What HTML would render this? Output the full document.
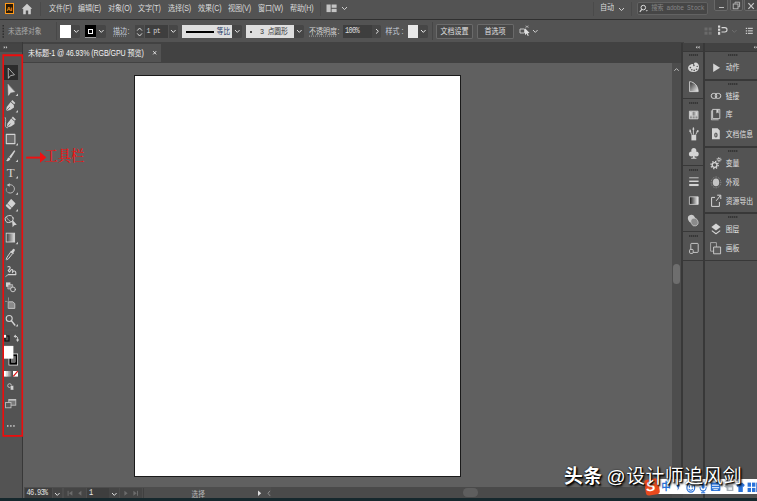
<!DOCTYPE html>
<html lang="zh-CN">
<head>
<meta charset="utf-8">
<title>Illustrator</title>
<style>
html,body{margin:0;padding:0;}
body{width:757px;height:501px;overflow:hidden;position:relative;background:#606060;font-family:"Liberation Sans","Noto Sans CJK SC",sans-serif;color:#d6d6d6;font-size:7px;}
.abs,.t,svg{position:absolute;}
.t{white-space:nowrap;line-height:10px;height:10px;}
#menubar{left:0;top:0;width:757px;height:19px;background:#535353;}
#sep1{left:0;top:19px;width:757px;height:1.4px;background:#303030;}
#ctrl{left:0;top:20px;width:757px;height:23px;background:#535353;}
#tabbar{left:0;top:42px;width:684px;height:20.5px;background:#424242;}
#tab{left:23.1px;top:44px;width:138.4px;height:18px;background:#535353;}
#tools{left:0;top:43.6px;width:21.6px;height:454.4px;background:#535353;}
#toolsep{left:21.6px;top:42.4px;width:1.5px;height:455.6px;background:#383838;}
#artboard{left:134px;top:75px;width:325px;height:400px;background:#fff;border:1px solid #1a1a1a;}
.m,.c,.pl,.btn,.sy{transform:scaleY(1.17);transform-origin:50% 50%;}
.m{top:3.8px;font-size:7.1px;color:#dadada;letter-spacing:-0.12px;}
.c{top:26.6px;font-size:7px;color:#cfcfcf;}
.dd{background:#464646;border-radius:0 1.5px 1.5px 0;}
.field{background:#3e3e3e;}
.btn{border:1px solid #6a6a6a;border-radius:1.5px;box-sizing:border-box;text-align:center;color:#e0e0e0;font-size:7px;line-height:11px;height:13px;top:24.5px;background:#484848;}
.pg{background:#535353;}
.pg2{background:#515151;}
.grip{position:absolute;width:9.4px;height:1.8px;background:repeating-linear-gradient(90deg,#363636 0 1.4px,#464646 1.4px 2px);}
.pl{margin-top:0.5px;font-size:6.8px;color:#e0e0e0;left:725.8px;}
.wm{font-size:18.8px;line-height:26px;height:26px;color:#fff;text-shadow:1px 1px 1px #000,0 0 1.5px #000,1.5px 1.5px 2px rgba(0,0,0,.8);letter-spacing:0px;}
</style>
</head>
<body>
<!-- MENU BAR -->
<div class="abs" id="menubar"></div>
<div class="abs" id="sep1"></div>
<div class="abs" style="left:5px;top:3.3px;width:9px;height:10.3px;box-sizing:border-box;border:1px solid #ff9a1a;background:#2c1a05;"></div>
<div class="t" style="left:6.4px;top:3.6px;font-size:6px;font-weight:bold;color:#ff9a1a;letter-spacing:-0.3px;">Ai</div>
<svg style="left:21px;top:3px" width="12" height="12" viewBox="0 0 12 12"><path d="M6 0.8 L11.2 5.8 L9.8 5.8 L9.8 11.2 L7.2 11.2 L7.2 7.6 L4.8 7.6 L4.8 11.2 L2.2 11.2 L2.2 5.8 L0.8 5.8 Z" fill="#cdcdcd"/></svg>
<div class="abs" style="left:40px;top:2px;width:1px;height:14px;background:#4a4a4a;"></div>
<div class="t m" style="left:49px;">文件(F)</div>
<div class="t m" style="left:78px;">编辑(E)</div>
<div class="t m" style="left:108px;">对象(O)</div>
<div class="t m" style="left:138px;">文字(T)</div>
<div class="t m" style="left:168px;">选择(S)</div>
<div class="t m" style="left:198px;">效果(C)</div>
<div class="t m" style="left:228px;">视图(V)</div>
<div class="t m" style="left:258px;">窗口(W)</div>
<div class="t m" style="left:290px;">帮助(H)</div>
<div class="abs" style="left:320px;top:2px;width:1px;height:14px;background:#4a4a4a;"></div>
<svg style="left:326px;top:4px" width="12" height="9" viewBox="0 0 12 9"><rect x="0.5" y="0.5" width="4.2" height="7.6" fill="#c4c4c4"/><rect x="5.6" y="0.5" width="5" height="3.3" fill="#c4c4c4"/><rect x="5.6" y="4.8" width="5" height="3.3" fill="#c4c4c4"/></svg>
<svg style="left:341px;top:6px" width="7" height="5" viewBox="0 0 7 5"><path d="M1 1 L3.5 3.6 L6 1" fill="none" stroke="#d0d0d0" stroke-width="1"/></svg>
<!-- menu right -->
<div class="abs" style="left:593px;top:2px;width:1px;height:14px;background:#4a4a4a;"></div>
<div class="t m" style="left:600px;top:3px;">自动</div>
<svg style="left:618px;top:7px" width="7" height="5" viewBox="0 0 7 5"><path d="M1 1 L3.5 3.6 L6 1" fill="none" stroke="#d0d0d0" stroke-width="1"/></svg>
<div class="abs" style="left:631px;top:2px;width:1px;height:14px;background:#4a4a4a;"></div>
<div class="abs" style="left:637px;top:2px;width:71px;height:12.5px;box-sizing:border-box;border:1px solid #626262;border-radius:2px;background:#464646;"></div>
<svg style="left:639px;top:4px" width="10" height="9" viewBox="0 0 10 9"><circle cx="4.3" cy="3.6" r="2.3" fill="none" stroke="#dcdcdc" stroke-width="1"/><path d="M2.8 5.4 L0.8 7.8" stroke="#dcdcdc" stroke-width="1.1"/><path d="M6.6 6.2 L9 6.2 L7.8 7.6 Z" fill="#dcdcdc"/></svg>
<div class="t sy" style="left:651.2px;top:4px;font-size:6.3px;color:#858585;font-family:'Liberation Mono','Noto Sans CJK SC',monospace;letter-spacing:-0.35px;">搜索 adobe Stock</div>
<div class="abs" style="left:714px;top:-1px;width:14px;height:12px;box-sizing:border-box;border:1px solid #686868;border-radius:0 0 2px 2px;background:#4a4a4a;"></div>
<div class="abs" style="left:729.5px;top:-1px;width:13px;height:12px;box-sizing:border-box;border:1px solid #686868;border-radius:0 0 2px 2px;background:#4a4a4a;"></div>
<div class="abs" style="left:744px;top:-1px;width:14px;height:12px;box-sizing:border-box;border:1px solid #686868;border-radius:0 0 2px 2px;background:#4a4a4a;"></div>
<div class="abs" style="left:718.5px;top:6.5px;width:5.6px;height:1.5px;background:#bcbcbc;"></div>
<svg style="left:732px;top:1px" width="9" height="9" viewBox="0 0 9 9"><path d="M3 2.6 V1.2 H7.6 V5.8 H6.2" fill="none" stroke="#bcbcbc" stroke-width="0.9"/><rect x="1.2" y="3" width="4.8" height="4.8" fill="none" stroke="#bcbcbc" stroke-width="0.9"/></svg>
<svg style="left:747px;top:1.5px" width="8" height="8" viewBox="0 0 8 8"><path d="M1.4 1.2 L6.8 6.8 M6.8 1.2 L1.4 6.8" stroke="#c8c8c8" stroke-width="1.2"/></svg>
<!-- CONTROL BAR -->
<div class="abs" id="ctrl"></div>
<svg style="left:1.5px;top:24px" width="3" height="15" viewBox="0 0 3 15"><g fill="#2e2e2e"><rect x="0.5" y="1" width="1.5" height="1.5"/><rect x="0.5" y="3.8" width="1.5" height="1.5"/><rect x="0.5" y="6.6" width="1.5" height="1.5"/><rect x="0.5" y="9.4" width="1.5" height="1.5"/><rect x="0.5" y="12.2" width="1.5" height="1.5"/></g></svg>
<div class="t c" style="left:8px;color:#a9a9a9;font-size:6.7px;">未选择对象</div>
<div class="abs" style="left:56px;top:22px;width:1px;height:18px;background:#484848;"></div>
<div class="abs" style="left:60px;top:25px;width:11.3px;height:12.6px;background:#ffffff;"></div>
<div class="abs dd" style="left:71.3px;top:25px;width:9px;height:12.6px;"></div>
<svg style="left:72.8px;top:29px" width="7" height="5" viewBox="0 0 7 5"><path d="M1 1 L3.3 3.4 L5.6 1" fill="none" stroke="#e0e0e0" stroke-width="1"/></svg>
<div class="abs" style="left:85.2px;top:25px;width:10.6px;height:12.6px;background:#000;box-sizing:border-box;border-bottom:1px solid #999;"></div>
<div class="abs" style="left:88.3px;top:28.6px;width:4.6px;height:5px;box-sizing:border-box;border:1.2px solid #fff;background:#000;"></div>
<div class="abs dd" style="left:96px;top:25px;width:9.5px;height:12.6px;"></div>
<svg style="left:97.8px;top:29px" width="7" height="5" viewBox="0 0 7 5"><path d="M1 1 L3.3 3.4 L5.6 1" fill="none" stroke="#e0e0e0" stroke-width="1"/></svg>
<div class="t c" style="left:113px;color:#c8d0dc;text-decoration:underline dotted rgba(170,180,195,.6);text-underline-offset:1.2px;text-decoration-thickness:0.8px;">描边</div>
<div class="t c" style="left:127.5px;">:</div>
<div class="abs" style="left:135.3px;top:24.8px;width:8.7px;height:12.8px;background:#464646;"></div>
<svg style="left:136px;top:25.5px" width="8" height="12" viewBox="0 0 8 12"><path d="M1.2 4.6 L3.6 2 L6 4.6 M1.2 7.4 L3.6 10 L6 7.4" fill="none" stroke="#d8d8d8" stroke-width="1"/></svg>
<div class="abs field" style="left:144.6px;top:24.8px;width:23.8px;height:12.8px;"></div>
<div class="t c" style="left:146.4px;top:26.8px;font-family:'Liberation Mono',monospace;font-size:6.6px;letter-spacing:-0.5px;color:#dcdcdc;">1 pt</div>
<div class="abs dd" style="left:168.6px;top:24.8px;width:9.6px;height:12.8px;"></div>
<svg style="left:170px;top:29px" width="7" height="5" viewBox="0 0 7 5"><path d="M1 1 L3.3 3.4 L5.6 1" fill="none" stroke="#e0e0e0" stroke-width="1"/></svg>
<div class="abs" style="left:182.2px;top:24.8px;width:49.6px;height:12.8px;background:#dedede;"></div>
<div class="abs" style="left:185.6px;top:31px;width:28.4px;height:2px;background:#000;"></div>
<div class="t sy" style="left:216.8px;top:27px;font-size:6.6px;color:#1f3a66;">等比</div>
<div class="abs dd" style="left:232.3px;top:24.8px;width:9.8px;height:12.8px;"></div>
<svg style="left:234px;top:29px" width="7" height="5" viewBox="0 0 7 5"><path d="M1 1 L3.3 3.4 L5.6 1" fill="none" stroke="#e0e0e0" stroke-width="1"/></svg>
<div class="abs" style="left:246px;top:24.8px;width:47.6px;height:12.8px;background:#dedede;"></div>
<div class="abs" style="left:250.4px;top:30.6px;width:2px;height:2px;border-radius:1px;background:#111;"></div>
<div class="t sy" style="left:260px;top:26.8px;font-size:6.8px;color:#333;font-family:'Liberation Mono','Noto Sans CJK SC',monospace;letter-spacing:-0.2px;">3 点圆形</div>
<div class="abs dd" style="left:294.2px;top:24.8px;width:9.8px;height:12.8px;"></div>
<svg style="left:296px;top:29px" width="7" height="5" viewBox="0 0 7 5"><path d="M1 1 L3.3 3.4 L5.6 1" fill="none" stroke="#e0e0e0" stroke-width="1"/></svg>
<div class="t c" style="left:309px;color:#d4d4d4;text-decoration:underline dotted rgba(190,190,190,.6);text-underline-offset:1.2px;text-decoration-thickness:0.8px;">不透明度</div>
<div class="t c" style="left:337.5px;">:</div>
<div class="abs field" style="left:343.4px;top:24.8px;width:28.4px;height:12.8px;"></div>
<div class="t c" style="left:345px;top:26.2px;font-family:'Liberation Mono',monospace;font-size:7px;letter-spacing:-0.7px;color:#dcdcdc;">100%</div>
<div class="abs dd" style="left:372.2px;top:24.8px;width:9.2px;height:12.8px;"></div>
<svg style="left:374.5px;top:28px" width="5" height="7" viewBox="0 0 5 7"><path d="M1 1 L3.4 3.3 L1 5.6" fill="none" stroke="#e0e0e0" stroke-width="1"/></svg>
<div class="t c" style="left:385.5px;color:#c8d0dc;">样式 :</div>
<div class="abs" style="left:407.6px;top:25px;width:10.2px;height:13px;background:#e8e8e8;"></div>
<div class="abs dd" style="left:418px;top:25px;width:10.3px;height:13px;"></div>
<svg style="left:420px;top:29px" width="7" height="5" viewBox="0 0 7 5"><path d="M1 1 L3.3 3.4 L5.6 1" fill="none" stroke="#e8e8e8" stroke-width="1"/></svg>
<div class="abs" style="left:432px;top:22px;width:1px;height:18px;background:#464646;"></div>
<div class="abs btn" style="left:435.8px;width:37.6px;">文档设置</div>
<div class="abs btn" style="left:476.6px;width:37px;">首选项</div>
<svg style="left:519px;top:25px" width="12" height="12" viewBox="0 0 12 12"><path d="M1 4 H5.5 V8 H1 Z" fill="none" stroke="#d0d0d0" stroke-width="0.9"/><path d="M6 3.2 L6 10.2 L7.6 8.6 L8.8 11 L9.8 10.5 L8.6 8.2 L10.6 8 Z" fill="#e0e0e0"/><path d="M6.5 0.8 L9.5 2.5 M9.5 0.8 L6.5 2.5" stroke="#c0c0c0" stroke-width="0.7"/></svg>
<svg style="left:531.5px;top:29px" width="7" height="5" viewBox="0 0 7 5"><path d="M1 1 L3.3 3.4 L5.6 1" fill="none" stroke="#d0d0d0" stroke-width="1"/></svg>
<!-- control right icons -->
<svg style="left:704px;top:26.6px" width="9" height="9" viewBox="0 0 9 9"><g fill="#6a6a6a"><rect x="0.5" y="0.5" width="3" height="3"/><rect x="4.7" y="0.5" width="3" height="3"/><rect x="0.5" y="4.7" width="3" height="3"/><rect x="4.7" y="4.7" width="3" height="3"/></g></svg>
<svg style="left:717px;top:25px" width="12" height="11" viewBox="0 0 12 11"><g fill="#d8d8d8"><rect x="1" y="0.5" width="2.2" height="2.2"/><rect x="1" y="3.6" width="2.2" height="2.2"/><rect x="1" y="6.8" width="2.2" height="3"/></g><path d="M4.5 2.6 H7.8 A2 2 0 0 1 7.8 7 H4.5" fill="none" stroke="#d8d8d8" stroke-width="1.1"/></svg>
<svg style="left:730.5px;top:29px" width="7" height="5" viewBox="0 0 7 5"><path d="M1 1 L3.3 3.4 L5.6 1" fill="none" stroke="#6e6e6e" stroke-width="1"/></svg>
<svg style="left:745px;top:27px" width="9" height="8" viewBox="0 0 9 8"><g fill="#d0d0d0"><rect x="0.8" y="0.8" width="1.2" height="1.2"/><rect x="0.8" y="3.3" width="1.2" height="1.2"/><rect x="0.8" y="5.8" width="1.2" height="1.2"/><rect x="2.8" y="0.8" width="5" height="1.1"/><rect x="2.8" y="3.3" width="5" height="1.1"/><rect x="2.8" y="5.8" width="5" height="1.1"/></g></svg>
<!-- TAB BAR / CANVAS -->
<div class="abs" id="tabbar"></div>
<div class="abs" id="tab"></div>
<div class="t sy" style="left:28px;top:48.5px;font-size:7.1px;color:#f2f2f2;letter-spacing:-0.1px;">未标题-1 @ 46.93% (RGB/GPU 预览)</div>
<svg style="left:152.4px;top:50.4px" width="6" height="6" viewBox="0 0 6 6"><path d="M1.2 1.2 L4.2 4.4 M4.2 1.2 L1.2 4.4" stroke="#e0e0e0" stroke-width="1"/></svg>
<div class="abs" id="artboard"></div>
<!-- vertical scrollbar -->
<div class="abs" style="left:672px;top:62.5px;width:9.2px;height:425px;background:#4d4d4d;"></div>
<svg style="left:673.4px;top:66.6px" width="7" height="5" viewBox="0 0 7 5"><path d="M1.3 3.8 L3.5 1.6 L5.7 3.8" fill="none" stroke="#c8c8c8" stroke-width="0.9"/></svg>
<div class="abs" style="left:672.8px;top:264px;width:7.6px;height:20px;border-radius:3.8px;background:#6e6e6e;"></div>
<!-- TOOLBAR -->
<div class="abs" id="tools"></div>
<div class="abs" style="left:0;top:43.6px;width:21.6px;height:8px;background:#444444;"></div>
<div class="abs" id="toolsep"></div>
<svg style="left:2.6px;top:45px" width="6" height="5" viewBox="0 0 6 5"><path d="M0.8 0.9 L2.2 2.3 L0.8 3.7 Z M2.9 0.9 L4.3 2.3 L2.9 3.7 Z" fill="#d0d0d0"/></svg>
<div class="abs" style="left:4px;top:65px;width:14px;height:15px;background:#2c2c2c;"></div>
<svg id="toolicons" style="left:0;top:60px" width="23" height="380" viewBox="0 60 23 380">
<g fill="none" stroke="#d2d2d2" stroke-width="1" stroke-linejoin="round" stroke-linecap="round">
<!-- selection -->
<path d="M8.2 68.4 L8.4 78.4 L10.4 75.7 L14.1 74.9 Z" stroke-width="0.8" stroke="#c8c8c8"/>
<!-- direct selection -->
<path d="M8 84.6 L8.4 95.4 L10.7 92.4 L14.5 91.8 Z" fill="#d2d2d2" stroke-width="0.5"/>
<!-- pen -->
<path d="M12.3 100.1 L15.3 103 L14.2 104.3 L11.1 101.4 Z" fill="#d2d2d2" stroke="none"/>
<path d="M10.6 101.9 L13.8 104.9 L14 107.4 L10.4 110.1 L6 111 L6.7 107 Z" fill="#d2d2d2" stroke="none"/>
<path d="M6.2 110.8 L9.6 107.4" stroke="#535353" stroke-width="0.7"/>
<!-- curvature -->
<path d="M12.9 116.6 L15.9 119.5 L14.8 120.8 L11.7 117.9 Z" fill="#d2d2d2" stroke="none"/>
<path d="M11.2 118.4 L14.4 121.4 L14.6 123.9 L11 126.6 L6.8 127.6 L7.4 123.5 Z" fill="#d2d2d2" stroke="none"/>
<path d="M7 127.3 L10.2 123.9" stroke="#535353" stroke-width="0.7"/>
<path d="M5.3 117.6 C6.4 120 5 123.6 5.4 126 C5.6 127.2 6.4 127.8 7.4 127.8" stroke-width="0.8" stroke="#c4c4c4"/>
<!-- rectangle -->
<rect x="6.3" y="134.4" width="8.6" height="9.2" fill="#6a6a6a" stroke-width="1.1"/>
<!-- brush -->
<path d="M14.3 150.2 L15.3 150.9 L10.9 158.2 L9 156.9 Z" fill="#d2d2d2" stroke="none"/>
<path d="M8.5 157.4 L10.5 158.8 C10 161 7.6 161.4 6 161 C7.4 160 7.2 158.4 8.5 157.4 Z" fill="#d2d2d2" stroke="none"/>
<!-- rotate -->
<path d="M9 184.8 C12.6 184 15.2 187 14.2 190.2 C13.5 192.4 11 193.8 8.6 192.8" stroke-width="0.9" stroke="#c4c4c4"/>
<path d="M6.6 185 L9.8 183.2 L9.6 186.8 Z" fill="#c8c8c8" stroke="none"/>
<path d="M7.4 192.2 C6.2 191.2 6 189.6 6.6 188.2" stroke-dasharray="1 1" stroke-width="0.8" stroke="#aaa"/>
<!-- eraser -->
<path d="M10.6 199.4 Q11.2 198.8 11.8 199.4 L15.2 202.9 Q15.7 203.5 15.2 204.1 L10.5 209.2 Q9.9 209.8 9.3 209.2 L6.1 206.2 Q5.5 205.6 6.1 205 Z" fill="#d2d2d2" stroke="none"/>
<path d="M7.4 203.8 L11.6 207.8" stroke="#535353" stroke-width="0.7"/>
<!-- shape builder -->
<ellipse cx="9.2" cy="219" rx="4" ry="3.4" transform="rotate(-15 9.2 219)" stroke-width="0.9"/>
<path d="M6.4 217.2 C8 220 10 221.6 12 222" stroke-width="0.7"/>
<path d="M12 219.6 L12.6 227.2 L14.2 225.2 L16.8 224.8 Z" fill="#d2d2d2" stroke="none"/>
<!-- eyedropper -->
<path d="M12.6 249.4 C13.6 248 15.6 249.6 14.6 250.9 L13.4 252.6 L13.9 253.2 L13.2 253.9 L10.4 251.4 L11 250.7 L11.6 251.1 Z" fill="#d2d2d2" stroke="none"/>
<path d="M11 252.2 L12.6 253.6 L8.4 258.8 L6.6 259.8 L6.2 259.4 L7 257.4 Z" stroke-width="1" fill="#5a5a5a"/>
<!-- symbol sprayer -->
<path d="M8 266.8 C9.6 266 10.8 267.2 9.8 268.6 L8.2 270.6 L9.6 272 L10.8 270.2 C11.6 269 13 269.6 12.8 270.8 L12.4 272.6 C13.4 270.4 15.8 270.6 15.8 272.8 L15.8 274.6 L8.4 274.6" stroke-width="1.15"/>
<path d="M8.4 274.4 L5.8 276.4" stroke-width="0.9"/>
<!-- live paint / blend -->
<rect x="6" y="282.4" width="4.4" height="4.4" fill="#d2d2d2" stroke="none"/>
<rect x="8.2" y="284.6" width="4.4" height="4.4" fill="#8a8a8a" stroke="#d2d2d2" stroke-width="0.6"/>
<circle cx="13" cy="289.4" r="2.4" fill="#535353" stroke-width="0.9"/>
<!-- artboard -->
<path d="M8.6 301.8 L12.8 301.8 L14.8 303.6 L14.8 308.4 L8.6 308.4 Z" fill="#8a8a8a" stroke-width="0.8"/>
<path d="M5.4 301.4 H7.2 M8.5 297.8 V300.4" stroke-width="0.6" stroke="#bbb"/>
<!-- zoom -->
<circle cx="9.2" cy="318.5" r="3" stroke-width="1.1"/>
<path d="M11.5 320.9 L14.8 325" stroke-width="1.5"/>
</g>
<!-- text tool -->
<text x="10.8" y="176.8" font-family="Liberation Serif, serif" font-size="13" fill="#d2d2d2" text-anchor="middle">T</text>
<!-- gradient -->
<defs><linearGradient id="gtool" x1="0" x2="1" y1="0" y2="0"><stop offset="0" stop-color="#3a3a3a"/><stop offset="1" stop-color="#e0e0e0"/></linearGradient>
<linearGradient id="gcm" x1="0" x2="1" y1="0" y2="0"><stop offset="0.3" stop-color="#ffffff"/><stop offset="1" stop-color="#6a6a6a"/></linearGradient></defs>
<rect x="6.2" y="233.2" width="8.4" height="8.8" fill="url(#gtool)" stroke="#d2d2d2" stroke-width="0.9"/>
<!-- sub-tool triangles -->
<g fill="#c8c8c8">
<path d="M18 93.5 V96.0 H15.6 Z"/><path d="M18 110.1 V112.6 H15.6 Z"/><path d="M18 143.1 V145.6 H15.6 Z"/><path d="M18 159.5 V162.0 H15.6 Z"/><path d="M18 175.9 V178.4 H15.6 Z"/><path d="M18 192.3 V194.8 H15.6 Z"/><path d="M18 208.9 V211.4 H15.6 Z"/><path d="M18 241.7 V244.2 H15.6 Z"/><path d="M18 324.1 V326.6 H15.6 Z"/>
</g>
<!-- separator -->
<rect x="4" y="329.6" width="14" height="0.8" fill="#5a5a5a"/>
<!-- default fill/stroke -->
<rect x="5" y="336" width="4" height="5" fill="#535353" stroke="#111" stroke-width="1.2"/>
<rect x="3.6" y="334.4" width="2.8" height="3.6" fill="#fff" stroke="#111" stroke-width="0.5"/>
<!-- swap -->
<path d="M14.6 336.2 C16.8 335.6 18 337.4 17.6 340" fill="none" stroke="#d2d2d2" stroke-width="1"/>
<path d="M13.6 336.4 L15.8 334.4 L15.8 338 Z M16 339.6 L19.2 339.6 L17.6 342 Z" fill="#d2d2d2"/>
<!-- stroke -->
<rect x="8.6" y="353.6" width="9.4" height="11.8" fill="#fff"/>
<rect x="9.3" y="354.3" width="8" height="10.4" fill="#000"/>
<rect x="11.3" y="356.6" width="4" height="5.8" fill="#6e6e6e" stroke="#bbb" stroke-width="0.4"/>
<!-- fill -->
<rect x="3.4" y="346" width="9.8" height="12.6" fill="#fff" stroke="#ddd" stroke-width="0.3"/>
<!-- color modes -->
<rect x="3.4" y="371" width="8.2" height="5.6" fill="url(#gcm)"/>
<rect x="5.9" y="371" width="0.5" height="5.6" fill="#bdbdbd"/><rect x="8.7" y="371" width="0.5" height="5.6" fill="#999"/>
<rect x="13" y="371" width="5" height="5.6" fill="#fff"/>
<path d="M13.2 376.4 L17.8 371.2" stroke="#e01010" stroke-width="1.2"/>
<!-- draw mode -->
<circle cx="9.6" cy="385.6" r="1.9" fill="none" stroke="#c8c8c8" stroke-width="0.9"/>
<rect x="10.4" y="385.6" width="3.2" height="4.4" fill="#d2d2d2" stroke="#535353" stroke-width="0.4"/>
<!-- screen mode -->
<rect x="8.8" y="399.4" width="7" height="5.8" fill="#777" stroke="#c8c8c8" stroke-width="0.8"/>
<rect x="8.8" y="399.4" width="7" height="1.2" fill="#c8c8c8"/>
<rect x="5.6" y="402.4" width="5.4" height="5.4" fill="#5a5a5a" stroke="#c8c8c8" stroke-width="0.8"/>
<!-- dots -->
<g fill="#cfcfcf"><rect x="7" y="425.2" width="1.5" height="1.5"/><rect x="10.1" y="425.2" width="1.5" height="1.5"/><rect x="13.2" y="425.2" width="1.5" height="1.5"/></g>
</svg>
<!-- RED ANNOTATION -->
<svg style="left:0;top:50px" width="26" height="390" viewBox="0 50 26 390"><path d="M2.4 54.2 H23.1 V436.7 H2.4 Z M4 56.3 V435.1 H21.5 V56.3 Z" fill="#ee0c0c" fill-rule="evenodd"/></svg>
<svg style="left:24px;top:150px" width="24" height="15" viewBox="0 0 24 15"><path d="M2.1 7.6 H17" stroke="#f01010" stroke-width="1.9"/><path d="M16 1.9 L22.3 7.4 L16 12.8 Z" fill="#f01010"/></svg>
<div class="t" style="left:44.6px;top:149.4px;font-size:13.2px;line-height:16px;height:16px;color:#f01212;font-weight:500;transform:scaleY(1.1);font-family:'Liberation Serif','Noto Serif CJK SC',serif;">工具栏</div>
<!-- RIGHT DOCK -->
<div class="abs" style="left:681px;top:43px;width:76px;height:455px;background:#383838;"></div>
<div class="abs" style="left:682.8px;top:43px;width:20.6px;height:8px;background:#424242;"></div>
<div class="abs" style="left:704.6px;top:43px;width:52.4px;height:8px;background:#424242;"></div>
<svg style="left:695px;top:44.5px" width="6" height="5" viewBox="0 0 6 5"><path d="M2.3 0.8 L0.8 2.3 L2.3 3.8 Z M4.5 0.8 L3 2.3 L4.5 3.8 Z" fill="#d0d0d0"/></svg>
<svg style="left:752.5px;top:44.5px" width="6" height="5" viewBox="0 0 6 5"><path d="M2.3 0.8 L0.8 2.3 L2.3 3.8 Z M4.5 0.8 L3 2.3 L4.5 3.8 Z" fill="#d0d0d0"/></svg>
<!-- icon column groups -->
<div class="abs pg" style="left:683px;top:51.5px;width:20.4px;height:46px;"></div>
<div class="abs pg" style="left:683px;top:99px;width:20.4px;height:65.6px;"></div>
<div class="abs pg" style="left:683px;top:166px;width:20.4px;height:64.6px;"></div>
<div class="abs pg" style="left:683px;top:232px;width:20.4px;height:27.6px;"></div>
<div class="abs pg2" style="left:683px;top:261px;width:20.4px;height:237px;"></div>
<!-- label column groups -->
<div class="abs pg" style="left:704.6px;top:51.5px;width:52.4px;height:27.5px;"></div>
<div class="abs pg" style="left:704.6px;top:80.5px;width:52.4px;height:65.6px;"></div>
<div class="abs pg" style="left:704.6px;top:147.5px;width:52.4px;height:64.6px;"></div>
<div class="abs pg" style="left:704.6px;top:213.5px;width:52.4px;height:46px;"></div>
<div class="abs pg2" style="left:704.6px;top:261px;width:52.4px;height:237px;"></div>
<!-- grippers -->
<div class="grip" style="left:689px;top:54.4px;"></div>
<div class="grip" style="left:689px;top:102px;"></div>
<div class="grip" style="left:689px;top:169px;"></div>
<div class="grip" style="left:689px;top:235px;"></div>
<div class="grip" style="left:728.4px;top:54.4px;"></div>
<div class="grip" style="left:728.4px;top:83.4px;"></div>
<div class="grip" style="left:728.4px;top:150.4px;"></div>
<div class="grip" style="left:728.4px;top:216.4px;"></div>
<!-- panel labels -->
<div class="t pl" style="top:62.8px;">动作</div>
<div class="t pl" style="top:91.3px;">链接</div>
<div class="t pl" style="top:109.6px;">库</div>
<div class="t pl" style="top:129px;">文档信息</div>
<div class="t pl" style="top:158px;">变量</div>
<div class="t pl" style="top:177.3px;">外观</div>
<div class="t pl" style="top:196.3px;">资源导出</div>
<div class="t pl" style="top:224.3px;">图层</div>
<div class="t pl" style="top:243.3px;">画板</div>
<!-- panel icons -->
<svg id="dockicons" style="left:683px;top:50px" width="74" height="212" viewBox="683 50 74 212">
<defs>
<linearGradient id="gcg" x1="0" x2="1" y1="0" y2="1"><stop offset="0" stop-color="#2a2a2a"/><stop offset="1" stop-color="#f0f0f0"/></linearGradient>
<linearGradient id="ggr" x1="0" x2="1" y1="0" y2="0"><stop offset="0" stop-color="#111"/><stop offset="1" stop-color="#f4f4f4"/></linearGradient>
</defs>
<g fill="none" stroke="#d4d4d4" stroke-width="1" stroke-linejoin="round">
<!-- color palette -->
<path d="M693.2 64 C690.4 64 688.1 65.8 688.1 68.2 C688.1 70.6 690.4 72 693.4 72 C696.8 72 699 70 699 67 C699 64.4 697.4 62.6 695.4 62.6 C694 62.6 693.6 63.8 694.4 64.8 C695.2 65.8 694.4 66.6 693.2 66 Z" fill="#d6d6d6" stroke="none"/>
<g fill="#535353" stroke="none"><circle cx="690.4" cy="67.6" r="0.8"/><circle cx="691.8" cy="69.8" r="0.8"/><circle cx="694.2" cy="70.4" r="0.8"/><circle cx="696.5" cy="69.2" r="0.8"/><circle cx="697.2" cy="66.4" r="0.7"/></g>
<!-- color guide -->
<path d="M689.6 81.6 C694.6 82 698 86 698.2 91.6 L689.6 91.6 Z" fill="url(#gcg)" stroke-width="0.9"/>
<!-- swatches -->
<rect x="689.4" y="111.2" width="8.6" height="7.6" fill="#8a8a8a" stroke-width="0.9"/>
<path d="M689.4 116 H698 M692.3 111.2 V118.8 M695.1 111.2 V118.8" stroke-width="0.7"/>
<rect x="689.9" y="111.7" width="2" height="4" fill="#d4d4d4" stroke="none"/><rect x="695.5" y="111.7" width="2" height="4" fill="#d4d4d4" stroke="none"/>
<!-- brushes -->
<path d="M691.4 134.8 H696.2 V140.4 H691.4 Z" fill="#d4d4d4" stroke="none"/>
<path d="M693.4 128 V134.6 M691.6 134.6 L690.2 131 M695.8 134.6 L697.4 131.2" stroke-width="0.9"/>
<path d="M692.8 129.6 L693.4 127.4 L694 129.6 Z M689.6 131.6 L690 129.6 L691 131.4 Z M696.8 131.6 L698 130 L698.2 132 Z" fill="#d4d4d4" stroke-width="0.6"/>
<!-- symbols club -->
<g fill="#d4d4d4" stroke="none"><circle cx="693.8" cy="150.4" r="2.5"/><circle cx="691.4" cy="154" r="2.5"/><circle cx="696.2" cy="154" r="2.5"/><path d="M693.2 153 H694.4 L694.8 157.8 H696.4 V158.8 H691.2 V157.8 H692.8 Z"/></g>
<!-- stroke -->
<path d="M689.2 177.8 H698.6" stroke-width="0.9"/><path d="M689.2 181.3 H698.6" stroke-width="1.5"/><path d="M689.2 185 H698.6" stroke-width="2.1"/>
<!-- gradient -->
<rect x="689.4" y="196.8" width="8.8" height="7.6" fill="url(#ggr)" stroke-width="0.8"/>
<!-- transparency -->
<ellipse cx="691.6" cy="218.8" rx="3.6" ry="4" fill="#cacaca" stroke="none" transform="rotate(-20 691.6 218.8)"/>
<ellipse cx="694.4" cy="222" rx="3.5" ry="4" fill="#8a8a8a" stroke="#c8c8c8" stroke-width="0.7" transform="rotate(-20 694.6 221.8)"/>
<!-- asset/artboard small -->
<rect x="690.8" y="243.4" width="7.4" height="9" rx="0.8" stroke-width="0.9"/>
<rect x="689.6" y="249.4" width="3.6" height="4" rx="1" fill="#535353" stroke-width="0.9"/>
<!-- play -->
<path d="M713.2 63.6 L720 67.8 L713.2 72 Z" fill="#d4d4d4" stroke="none"/>
<!-- links -->
<rect x="711.2" y="93.4" width="5.6" height="5" rx="2.4" stroke-width="1"/>
<rect x="715.2" y="93.4" width="5.6" height="5" rx="2.4" stroke-width="1"/>
<!-- library -->
<path d="M712.6 109.4 H719.8 V118.6 H712.6 Z" stroke-width="0.9"/>
<path d="M711.4 110.4 V119.8 H718.6" stroke-width="0.8"/>
<path d="M716.4 109.6 V113.4 L717.5 112.4 L718.6 113.4 V109.6 Z" fill="#d4d4d4" stroke="none"/>
<!-- doc info -->
<path d="M712 128.2 H717.6 L719.8 130.4 V139.2 H712 Z" fill="#d4d4d4" stroke="none"/>
<ellipse cx="715.9" cy="135" rx="1.7" ry="2.6" fill="#535353" stroke="none"/>
<rect x="715.5" y="133.6" width="0.8" height="2.8" fill="#d4d4d4" stroke="none"/>
<!-- variables gears -->
<circle cx="714.6" cy="165" r="2.4" stroke-width="1.3"/>
<circle cx="714.6" cy="165" r="3.6" stroke-width="1.4" stroke-dasharray="1.3 1.53"/>
<circle cx="719" cy="159.6" r="1.2" stroke-width="0.9"/>
<circle cx="719" cy="159.6" r="2.1" stroke-width="1" stroke-dasharray="0.8 0.85"/>
<!-- appearance -->
<ellipse cx="716" cy="182.4" rx="3.2" ry="3.8" fill="#c4c4c4" stroke="none"/>
<ellipse cx="716" cy="182.4" rx="4.8" ry="5.4" stroke-width="0.7" stroke-dasharray="0.8 0.9" stroke="#aaa"/>
<!-- export -->
<path d="M715 197.4 H711.6 V206.4 H719.4 V202" stroke-width="1"/>
<path d="M716.2 200.8 L720.4 195.6 M717.2 195.2 H720.8 V199" stroke-width="1"/>
<!-- layers -->
<path d="M716 223.6 L720.6 227 L716 230.4 L711.4 227 Z" fill="#d4d4d4" stroke="none"/>
<path d="M711.8 230.6 L716 233.8 L720.2 230.6" stroke-width="1.1"/>
<!-- artboards -->
<rect x="710.6" y="242.6" width="5.8" height="8.6" stroke-width="0.8" stroke="#bdbdbd"/>
<rect x="713.6" y="247" width="7" height="6.8" fill="#5c5c5c" stroke-width="0.9"/>
</g>
</svg>
<!-- STATUS BAR -->
<div class="abs" style="left:23.5px;top:487.3px;width:659px;height:10.7px;background:#4d4d4d;"></div>
<div class="abs" style="left:25px;top:488px;width:27.4px;height:10px;background:#3e3e3e;"></div>
<div class="t sy" style="left:26.6px;top:488.2px;font-family:'Liberation Mono',monospace;font-size:7px;letter-spacing:-0.75px;color:#e0e0e0;">46.93%</div>
<div class="abs" style="left:53px;top:488px;width:9.4px;height:10px;background:#454545;"></div>
<svg style="left:54.4px;top:491.6px" width="7" height="5" viewBox="0 0 7 5"><path d="M1 1 L3.3 3.4 L5.6 1" fill="none" stroke="#e0e0e0" stroke-width="1"/></svg>
<div class="abs" style="left:64px;top:488px;width:22px;height:10px;background:#454545;"></div>
<svg style="left:66px;top:490px" width="18" height="7" viewBox="0 0 18 7"><g fill="#6c6c6c"><rect x="1.6" y="0.8" width="1" height="5"/><path d="M6.4 0.8 V5.8 L3 3.3 Z"/><path d="M15.4 0.8 V5.8 L12.2 3.3 Z"/></g></svg>
<div class="abs" style="left:87px;top:488px;width:21.6px;height:10px;background:#3e3e3e;"></div>
<div class="t sy" style="left:89px;top:488.2px;font-family:'Liberation Mono',monospace;font-size:7px;color:#e8e8e8;">1</div>
<div class="abs" style="left:109.4px;top:488px;width:9.4px;height:10px;background:#454545;"></div>
<svg style="left:110.6px;top:491.6px" width="7" height="5" viewBox="0 0 7 5"><path d="M1 1 L3.3 3.4 L5.6 1" fill="none" stroke="#e0e0e0" stroke-width="1"/></svg>
<div class="abs" style="left:120px;top:488px;width:22px;height:10px;background:#454545;"></div>
<svg style="left:122px;top:490px" width="18" height="7" viewBox="0 0 18 7"><g fill="#6c6c6c"><path d="M2.4 0.8 V5.8 L5.6 3.3 Z"/><path d="M11.4 0.8 V5.8 L14.6 3.3 Z"/><rect x="15" y="0.8" width="1" height="5"/></g></svg>
<div class="abs" style="left:142.6px;top:488px;width:1px;height:10px;background:#404040;"></div>
<div class="t sy" style="left:191.6px;top:489.6px;font-size:6.6px;color:#b8b8b8;">选择</div>
<svg style="left:256.8px;top:490.2px" width="5" height="7" viewBox="0 0 5 7"><path d="M1 0.6 V6 L4.2 3.3 Z" fill="#e0e0e0"/></svg>
<svg style="left:267px;top:490.2px" width="4" height="7" viewBox="0 0 4 7"><path d="M3 0.8 L1 3.3 L3 5.8" fill="none" stroke="#a0a0a0" stroke-width="0.8"/></svg>
<!-- horizontal scroll -->
<div class="abs" style="left:271px;top:487.3px;width:401px;height:10.7px;background:#4a4a4a;"></div>
<div class="abs" style="left:463px;top:488.4px;width:15px;height:8.6px;border-radius:4.3px;background:#5e5e5e;"></div>
<!-- taskbar strip -->
<div class="abs" style="left:0;top:497.6px;width:757px;height:3.4px;background:#16282d;"></div>
<!-- IME BAR -->
<div class="abs" style="left:648px;top:479px;width:109px;height:15px;background:#ffffff;border-radius:3px 0 0 3px;"></div>
<div class="abs" style="left:644.6px;top:478.6px;width:13.6px;height:15.6px;background:#ea4a1e;border-radius:3px;transform:rotate(-9deg);"></div>
<div class="t" style="left:646.4px;top:479px;font-size:14px;line-height:15px;height:15px;font-weight:bold;font-style:italic;color:#fff;transform:rotate(-6deg);">S</div>
<div class="t" style="left:661.2px;top:481.2px;font-size:9.6px;line-height:11px;height:11px;font-weight:bold;color:#2a72d8;transform:scaleY(1.1);">中</div>
<svg style="left:674px;top:479px" width="84" height="16" viewBox="674 479 84 16">
<g transform="translate(0 487.2) scale(1 1.15) translate(0 -487.2)">
<g fill="#2a72d8">
<path d="M678.2 484 A1.5 1.5 0 1 1 678.2 487 C679.2 487 679.4 488.6 677.2 490 C678.2 488.8 678 487.4 676.8 486.4 C676.2 485.4 676.8 484 678.2 484 Z"/>
<circle cx="690.8" cy="487.6" r="3.9" fill="none" stroke="#2a72d8" stroke-width="1.2"/>
<rect x="688.9" y="485.6" width="1.1" height="2"/><rect x="691.6" y="485.6" width="1.1" height="2"/>
<path d="M688.6 488.6 Q690.8 491 693 488.6" fill="none" stroke="#2a72d8" stroke-width="0.9"/>
<rect x="701.6" y="483" width="3" height="5.6" rx="1.5"/>
<path d="M700 487 Q700 490.4 703.1 490.4 Q706.2 490.4 706.2 487" fill="none" stroke="#2a72d8" stroke-width="0.9"/>
<rect x="702.6" y="490.4" width="1" height="1.6"/><rect x="701" y="491.6" width="4.2" height="0.9"/>
<rect x="710.8" y="483.2" width="9.6" height="7.4" rx="1"/>
<g fill="#fff"><rect x="712" y="485" width="7.2" height="0.9"/><rect x="712" y="487.2" width="7.2" height="0.9"/><rect x="713.4" y="489" width="4.4" height="0.7"/></g>
<path d="M736.4 485.2 L738.8 483.4 H742.4 L744.8 485.2 L743.6 487 L742.8 486.4 V491.4 H738.4 V486.4 L737.6 487 Z"/>
<rect x="747.6" y="483.2" width="3.4" height="3.6"/><rect x="752" y="483.2" width="3.4" height="3.6"/><rect x="747.6" y="487.8" width="3.4" height="3.6"/><rect x="752" y="487.8" width="3.4" height="3.6"/><rect x="756.2" y="483.2" width="1" height="8.2"/>
</g>
<g fill="#a9b1b8"><rect x="726.6" y="485.6" width="6.8" height="5" rx="0.6"/><path d="M724 486.4 L727.6 484 V488.8 Z"/></g>
<rect x="728.4" y="487.4" width="3.6" height="2.2" fill="#e8ecef"/>
</g>
</svg>
<!-- WATERMARK -->
<div class="t wm" style="left:564px;top:464px;font-weight:bold;letter-spacing:0.5px;">头条</div>
<div class="t wm" style="left:606.6px;top:464px;letter-spacing:0.55px;">@设计师追风剑</div>
</body>
</html>
